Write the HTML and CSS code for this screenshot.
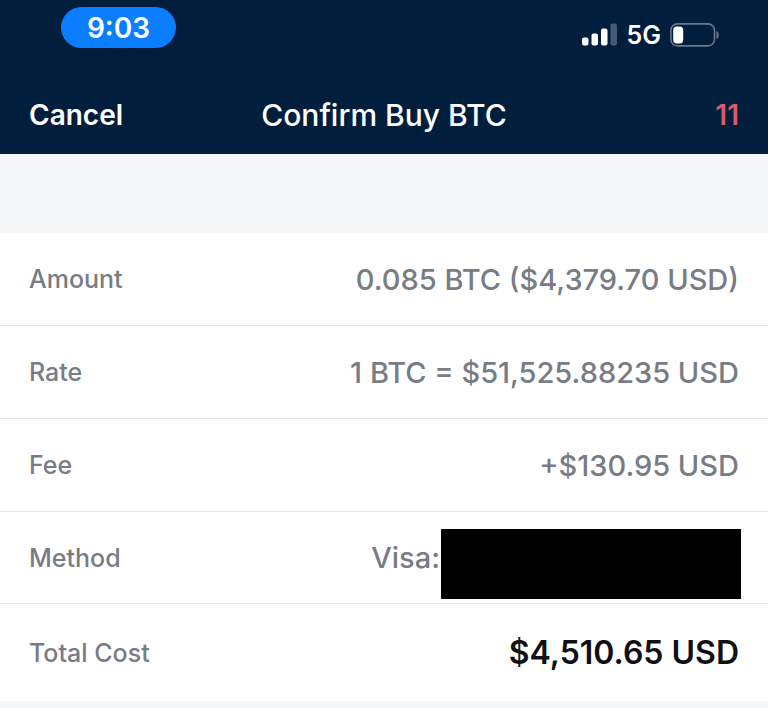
FILE: index.html
```html
<!DOCTYPE html>
<html lang="en">
<head>
    <meta charset="UTF-8">
    <meta name="viewport" content="width=device-width, initial-scale=1.0">
    <title>Confirm Buy BTC</title>
    <link rel="stylesheet" href="styles.css">
</head>
<body>
    <header>
        <div class="status-bar">
            <span class="clock">9:03</span>
            <div class="status-right">
                <svg class="signal" width="36" height="24" viewBox="0 0 36 24">
                    <rect x="0" y="14.5" width="6.5" height="8" rx="2" fill="#fff"/>
                    <rect x="9.5" y="10.5" width="6.5" height="12" rx="2" fill="#fff"/>
                    <rect x="19" y="5.5" width="6.5" height="17" rx="2" fill="#fff"/>
                    <rect x="28.5" y="0.5" width="6.5" height="22" rx="2" fill="#fff" fill-opacity="0.27"/>
                </svg>
                <span class="network">5G</span>
                <svg class="battery" width="50" height="24" viewBox="0 0 50 24">
                    <rect x="0.9" y="0.9" width="43.6" height="22" rx="6.5" fill="none" stroke="#6a778d" stroke-width="1.6"/>
                    <rect x="3.2" y="3.4" width="10" height="17" rx="3.6" fill="#fff"/>
                    <path d="M46.5 8c3 1 3 7 0 8z" fill="#6a778d"/>
                </svg>
            </div>
        </div>
        <nav class="nav-bar">
            <button type="button" class="cancel">Cancel</button>
            <h1>Confirm Buy BTC</h1>
            <span class="countdown">11</span>
        </nav>
    </header>
    <main>
        <dl class="summary">
            <div class="row">
                <dt>Amount</dt>
                <dd>0.085 BTC ($4,379.70 USD)</dd>
            </div>
            <div class="row">
                <dt>Rate</dt>
                <dd>1 BTC = $51,525.88235 USD</dd>
            </div>
            <div class="row">
                <dt>Fee</dt>
                <dd>+$130.95 USD</dd>
            </div>
            <div class="row method">
                <dt>Method</dt>
                <dd>Visa:<span class="redacted"></span></dd>
            </div>
            <div class="row total">
                <dt>Total Cost</dt>
                <dd>$4,510.65 USD</dd>
            </div>
        </dl>
    </main>
</body>
</html>
```
FILE: styles.css
```css
* {
    margin: 0;
    padding: 0;
    box-sizing: border-box;
}

body {
    font-family: Inter, "Liberation Sans", sans-serif;
    background: #f5f6f8;
    color: #777c85;
    min-height: 100vh;
}

header {
    background: #021e3d;
    color: white;
}

.status-bar {
    display: flex;
    justify-content: space-between;
    align-items: flex-start;
    height: 76px;
    padding: 7px 48px 0 61px;
}

.clock {
    width: 115px;
    height: 41px;
    line-height: 43px;
    border-radius: 21px;
    background: #0a7eff;
    font-size: 28px;
    font-weight: 600;
    text-align: center;
}

.status-right {
    display: flex;
    align-items: center;
    gap: 9px;
    padding-top: 12px;
}

.network {
    font-size: 25px;
    font-weight: 600;
    line-height: 32px;
}

.nav-bar {
    display: grid;
    grid-template-columns: 1fr auto 1fr;
    align-items: center;
    height: 78px;
    padding: 0 29px;
}

.cancel {
    justify-self: start;
    background: none;
    border: none;
    color: white;
    font-family: inherit;
    font-size: 28px;
    font-weight: 600;
    cursor: pointer;
}

.nav-bar h1 {
    font-size: 30px;
    font-weight: 500;
}

.countdown {
    justify-self: end;
    color: #dc5a6c;
    font-size: 28px;
    font-weight: 600;
}

.summary {
    margin-top: 79px;
    background: white;
}

.row {
    display: flex;
    justify-content: space-between;
    align-items: center;
    min-height: 93px;
    padding: 0 29px;
    border-bottom: 1px solid #e6e7ea;
}

.row dt {
    font-size: 25px;
    font-weight: 500;
}

.row dd {
    font-size: 29px;
    font-weight: 500;
}

.row.method {
    min-height: 92px;
    padding-right: 27px;
}

.method dd {
    display: flex;
    align-self: stretch;
    align-items: center;
}

/* blacked-out card number */
.redacted {
    align-self: flex-end;
    width: 300px;
    height: 70px;
    margin: 0 0 4px 1px;
    background: black;
}

.row.total {
    min-height: 97px;
    border-bottom: none;
}

.total dd {
    color: #101014;
    font-size: 32px;
    font-weight: 600;
}
```
